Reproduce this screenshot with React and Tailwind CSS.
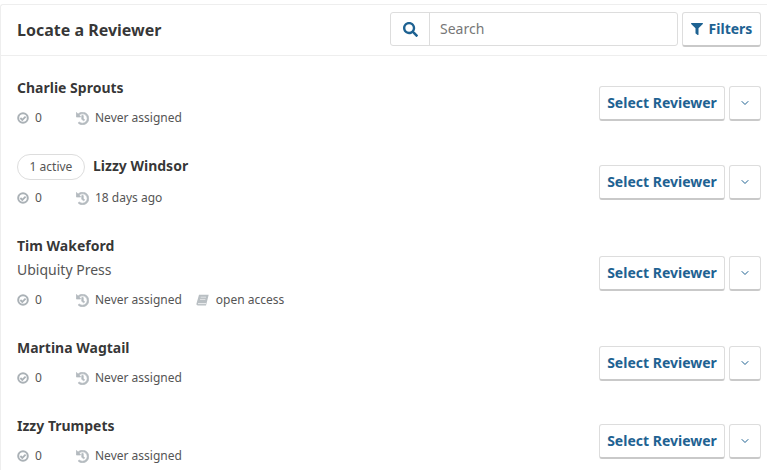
import { FaSearch, FaFilter, FaHistory } from "react-icons/fa";
import { ChevronDown } from "lucide-react";

const reviewers = [
  { name: "Charlie Sprouts", last: "Never assigned" },
  { name: "Lizzy Windsor", last: "18 days ago", active: "1 active" },
  { name: "Tim Wakeford", org: "Ubiquity Press", last: "Never assigned", interest: "open access" },
  { name: "Martina Wagtail", last: "Never assigned" },
  { name: "Izzy Trumpets", last: "Never assigned" },
];

const btn =
  "flex items-center justify-center rounded-[3px] border border-[#ddd] border-b-[#c9c9c9] border-b-2 bg-white text-[#1e6292]";

const CheckIcon = () => (
  <svg width="12" height="12" viewBox="0 0 12 12" fill="none" stroke="currentColor" className="text-[#aab1b6]">
    <circle cx="6" cy="6" r="4.8" strokeWidth="2" />
    <path d="M3.4 6l1.9 1.9 3.3-3.3" strokeWidth="1.8" />
  </svg>
);

const BookIcon = () => (
  <svg width="13" height="13" viewBox="0 0 13 13" className="ml-[14px] text-[#b9bfc3]">
    <path d="M3 .8h9.7L10 11.6H2C.8 11.6.2 10.8.5 9.6L3 .8z" fill="currentColor" />
    <path d="M2 9.6h8" stroke="#eceeef" strokeWidth="1" />
    <path d="M4.6 3.2h5.4M4 5.4h5.4" stroke="#eceeef" strokeWidth="0.8" />
  </svg>
);

const ReviewerRow = ({ reviewer }) => (
  <div className="flex items-center justify-between pt-3 pb-[14px] pl-4 pr-[6px]">
    <div>
      <div className="flex items-center">
        {reviewer.active && (
          <span className="mr-2 flex h-[26px] w-[68px] items-center justify-center rounded-full border border-[#ddd] text-xs text-[#555]">
            {reviewer.active}
          </span>
        )}
        <span className={`text-sm leading-6 font-bold text-[rgba(0,0,0,0.8)] ${reviewer.active ? "pb-[2px]" : ""}`}>
          {reviewer.name}
        </span>
      </div>
      {reviewer.org && <div className="text-sm leading-6 text-[#555]">{reviewer.org}</div>}
      <div className="mt-2 flex h-5 items-center text-xs text-[#555]">
        <CheckIcon />
        <span className="ml-[6px] w-[41px]">0</span>
        <FaHistory className="stroke-[24] text-[13px] text-[#b4babf]" />
        <span className="ml-[6px]">{reviewer.last}</span>
        {reviewer.interest && (
          <>
            <BookIcon />
            <span className="ml-[7px]">{reviewer.interest}</span>
          </>
        )}
      </div>
    </div>
    <div className="mt-[3px] flex gap-1">
      <button className={`${btn} h-[35px] w-[126px] text-sm font-bold`}>Select Reviewer</button>
      <button className={`${btn} h-[35px] w-8`}>
        <ChevronDown size={12} strokeWidth={2} />
      </button>
    </div>
  </div>
);

export default function App() {
  return (
    <div className="h-[470px] w-[767px] overflow-hidden bg-white pt-1 font-['Noto_Sans',sans-serif]">
      <div className="rounded-tl-[3px] border-t border-l border-[#eee]">
        {/* Header */}
        <div className="flex h-[51px] items-center justify-between border-b border-[#eee] pr-[6px] pb-[2px] pl-4">
          <h2 className="mt-[2px] text-base font-bold text-[rgba(0,0,0,0.8)]">Locate a Reviewer</h2>
          <div className="flex items-center gap-1">
            <div className="flex h-[34px] w-[288px] rounded-[3px] border border-[#ddd]">
              <div className="flex w-[39px] items-center justify-center border-r border-[#ddd] text-[#1e6292]">
                <FaSearch className="text-[15px]" />
              </div>
              <div className="flex items-center pl-[10px] text-sm text-[#777]">Search</div>
            </div>
            <button className={`${btn} h-[35px] w-[79px] gap-[6px] text-sm font-bold`}>
              <FaFilter className="text-[12px]" />
              Filters
            </button>
          </div>
        </div>
        {/* Reviewer list */}
        <div className="pt-2">
          {reviewers.map((r) => (
            <ReviewerRow key={r.name} reviewer={r} />
          ))}
        </div>
      </div>
    </div>
  );
}
